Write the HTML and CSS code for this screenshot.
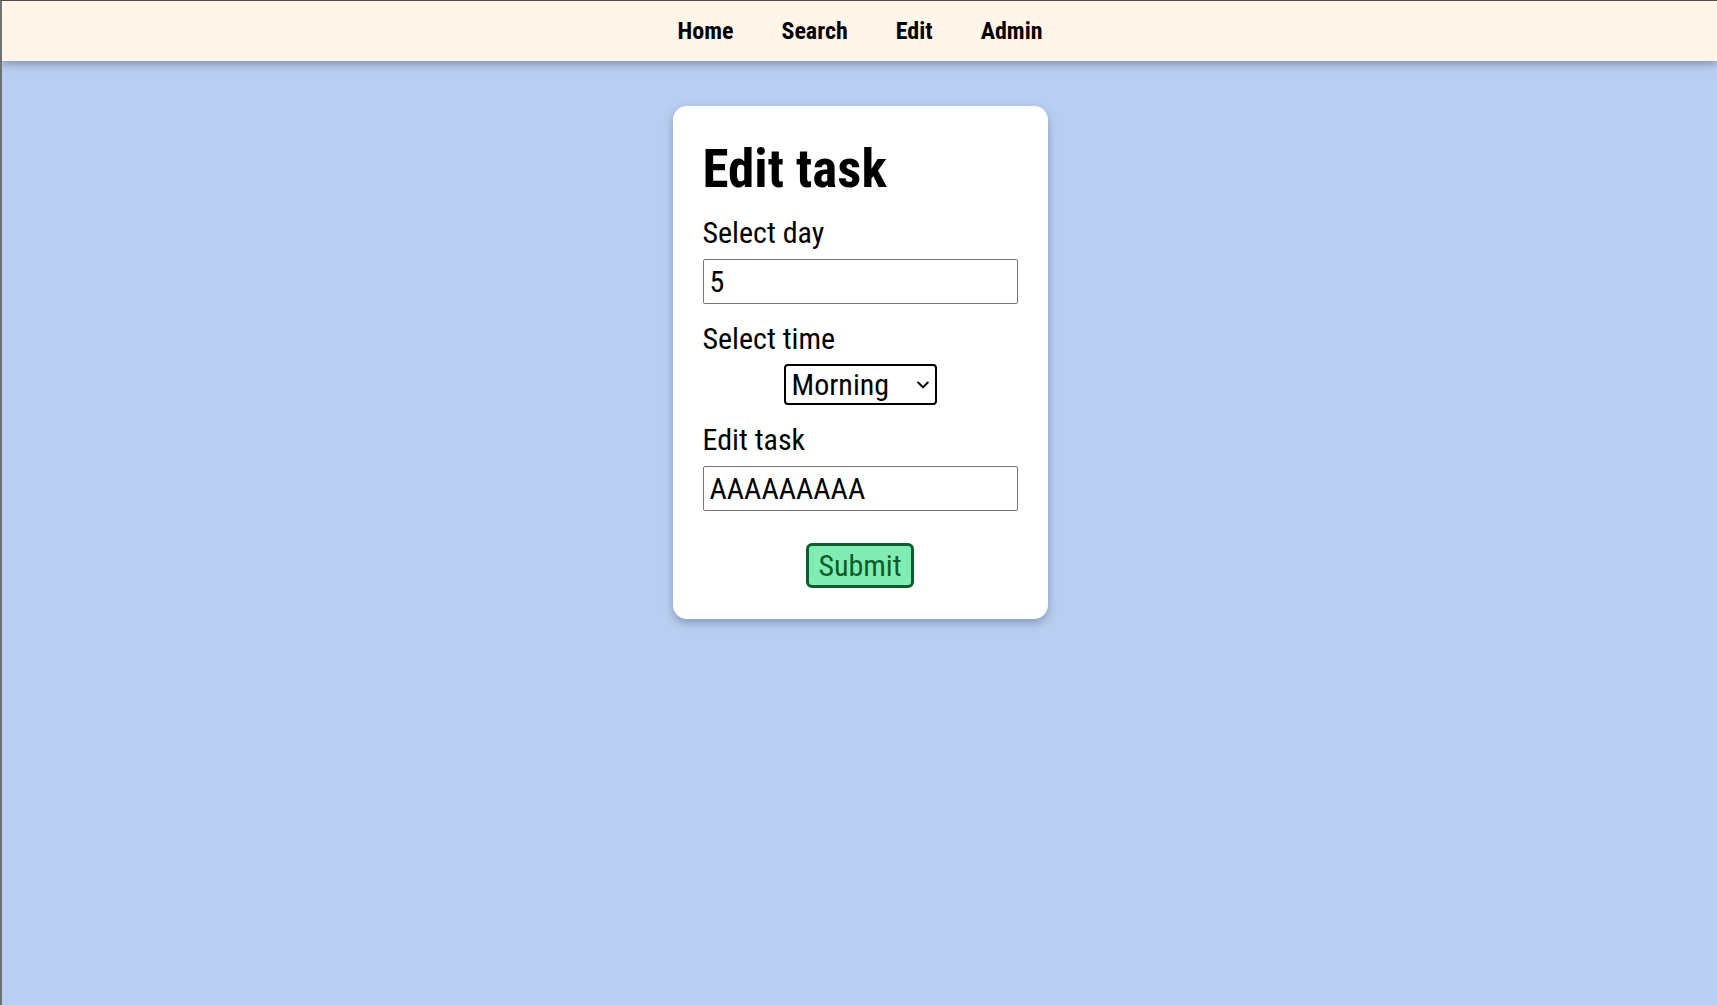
FILE: index.html
```html
<!DOCTYPE html>
<html lang="en">
<head>
<meta charset="utf-8">
<title>Edit task</title>
<link rel="stylesheet" href="styles.css">
</head>
<body>
<nav class="navbar">
  <a class="nav-link" href="#">Home</a>
  <a class="nav-link" href="#">Search</a>
  <a class="nav-link" href="#">Edit</a>
  <a class="nav-link" href="#">Admin</a>
</nav>
<main class="page">
  <form class="card">
    <h1 class="card-title">Edit task</h1>
    <label class="field-label" for="day">Select day</label>
    <input class="text-input" id="day" type="text" value="5">
    <label class="field-label" for="time">Select time</label>
    <div class="select-wrap">
      <select class="time-select" id="time">
        <option>Morning</option>
        <option>Afternoon</option>
        <option>Evening</option>
      </select>
      <svg class="select-arrow" width="12" height="8" viewBox="0 0 12 8" aria-hidden="true">
        <polyline points="1.2,1.5 6,6.2 10.8,1.5" fill="none" stroke="#000" stroke-width="1.9" stroke-linecap="round" stroke-linejoin="round"/>
      </svg>
    </div>
    <label class="field-label" for="task">Edit task</label>
    <input class="text-input" id="task" type="text" value="AAAAAAAAA">
    <button class="submit-btn" type="button">Submit</button>
  </form>
</main>
</body>
</html>
```

FILE: styles.css
```css
html, body {
  margin: 0;
  padding: 0;
  height: 100%;
}

body {
  box-sizing: border-box;
  background: #b9cef0;
  border-top: 1px solid #4d4d4d;
  border-left: 2px solid #717171;
  font-family: "Roboto Condensed", Roboto, "Liberation Sans", sans-serif;
  font-stretch: condensed;
  color: #000;
}

.navbar {
  height: 60px;
  padding-left: 1px;
  background: #fff6e9;
  display: flex;
  justify-content: center;
  align-items: center;
  gap: 48px;
  box-shadow: 0 3px 8px rgba(60, 70, 90, 0.45);
  position: relative;
}

.nav-link {
  color: #000;
  text-decoration: none;
  font-weight: 700;
  font-size: 24px;
}

.page {
  display: flex;
  justify-content: center;
  padding-top: 45px;
  padding-left: 1px;
}

.card {
  box-sizing: border-box;
  width: 375px;
  background: #fff;
  border-radius: 14px;
  padding: 32px 30px 31px;
  display: flex;
  flex-direction: column;
  box-shadow: 0 4px 10px rgba(70, 90, 130, 0.45);
}

.card-title {
  margin: 0 0 15px;
  font-size: 53px;
  font-weight: 700;
}

.field-label {
  font-size: 30px;
  margin-bottom: 9px;
}

.text-input {
  box-sizing: border-box;
  width: 100%;
  height: 45px;
  border: 1px solid #767676;
  border-radius: 2px;
  padding: 0 6px;
  font-family: inherit;
  font-size: 30px;
  margin-bottom: 17px;
  background: #fff;
  color: #000;
}

.select-wrap {
  position: relative;
  align-self: center;
  margin-top: -1px;
  margin-bottom: 17px;
}

.time-select {
  display: block;
  box-sizing: border-box;
  width: 153px;
  height: 41px;
  border: 2px solid #000;
  border-radius: 4px;
  padding: 0 6px;
  font-family: inherit;
  font-size: 30px;
  background: #fff;
  color: #000;
  -webkit-appearance: none;
  appearance: none;
}

.select-arrow {
  position: absolute;
  right: 8px;
  top: 50%;
  transform: translateY(-50%);
  pointer-events: none;
}

.submit-btn {
  align-self: center;
  box-sizing: border-box;
  margin-top: 15px;
  height: 45px;
  padding: 0 9px;
  border: 3px solid #0c5f2c;
  border-radius: 6px;
  background: #80eeb4;
  color: #0d5c2a;
  font-family: inherit;
  font-size: 30px;
}
```
